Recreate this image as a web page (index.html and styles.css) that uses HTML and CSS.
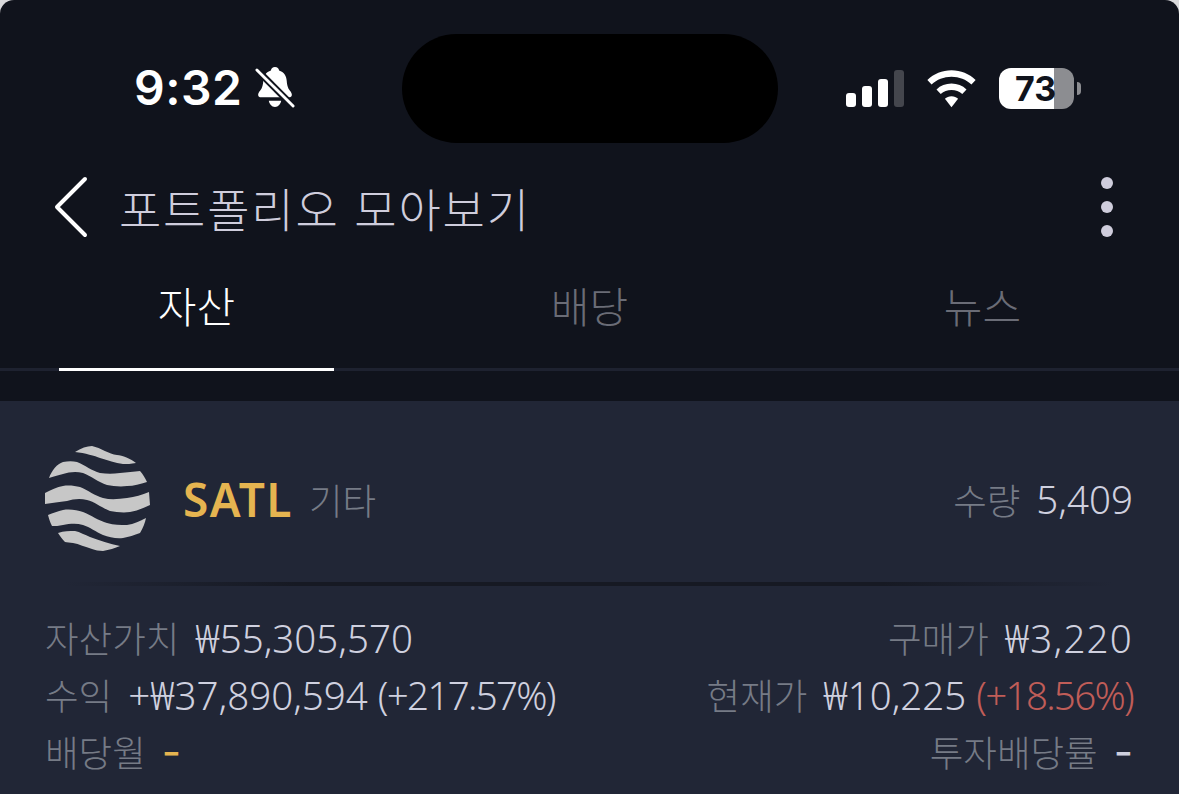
FILE: index.html
```html
<!DOCTYPE html>
<html lang="ko">
<head>
    <meta charset="UTF-8">
    <meta name="viewport" content="width=device-width, initial-scale=1.0">
    <title>포트폴리오 모아보기</title>
    <link rel="stylesheet" href="styles.css">
</head>
<body>
    <div class="screen">
        <div class="status-bar">
            <div class="status-left">
                <span class="clock">9:32</span>
                <svg class="bell" width="40" height="44" viewBox="0 0 42 44">
                    <path fill="#fff" d="M21 0c2.500 0 4 1.500 4.300 3.600 5 1.500 7.700 5.600 8 10.800.2 4 1 7.500 3.200 10.200 1.300 1.600 2.200 2.900 2.200 4.400 0 1.800-1.300 2.800-3.300 2.800H6.600c-2 0-3.300-1-3.300-2.800 0-1.500.9-2.800 2.200-4.400 2.200-2.700 3-6.200 3.200-10.200.3-5.200 3-9.300 8-10.800C17 1.500 18.500 0 21 0zM14.500 35.500h13c-.5 3.300-3 6.500-6.500 6.500s-6-3.200-6.500-6.500z"/>
                    <path stroke="#10131c" stroke-width="7" d="M1 2l40 40"/>
                    <path stroke="#fff" stroke-width="3" stroke-linecap="round" d="M2 3l38 38"/>
                </svg>
            </div>
            <div class="island"></div>
            <div class="status-right">
                <div class="signal">
                    <span class="bar bar-1"></span>
                    <span class="bar bar-2"></span>
                    <span class="bar bar-3"></span>
                    <span class="bar bar-4"></span>
                </div>
                <svg class="wifi" width="52" height="38" viewBox="0 0 52 38">
                    <path fill="#fff" d="M26 0c9.500 0 18 3.700 24.600 9.800l-4.300 4.600C40.900 9.500 33.800 6.600 26 6.600S11.100 9.500 5.700 14.400L1.400 9.800C8 3.700 16.500 0 26 0z"/>
                    <path fill="#fff" d="M26 13.500c5.900 0 11.200 2.200 15.300 5.900L37 24c-3-2.600-6.800-4.100-11-4.100S18 21.400 15 24l-4.300-4.600c4.100-3.700 9.400-5.900 15.300-5.900z"/>
                    <path fill="#fff" d="M26 26.500c2.700 0 5 1 6.700 2.500L26 37.500 19.300 29c1.700-1.500 4-2.500 6.700-2.500z"/>
                </svg>
                <div class="battery">
                    <div class="battery-body"><span>73</span></div>
                    <div class="battery-cap"></div>
                </div>
            </div>
        </div>

        <div class="title-bar">
            <svg class="back" width="36" height="62" viewBox="0 0 36 62">
                <path fill="none" stroke="#fff" stroke-width="4" stroke-linecap="round" stroke-linejoin="round" d="M32 3L4 31l28 28"/>
            </svg>
            <h1>포트폴리오 모아보기</h1>
            <div class="more">
                <span></span>
                <span></span>
                <span></span>
            </div>
        </div>

        <div class="tabs">
            <div class="tab active">자산</div>
            <div class="tab">배당</div>
            <div class="tab">뉴스</div>
        </div>

        <div class="card">
            <div class="card-head">
                <svg class="logo" width="106" height="106" viewBox="0 0 106 106">
                    <g fill="#c7c7c7">
                        <path d="M30 6C36 2 42 0 47 0c9 2 17 8 25 9 5 0 14 4 19 8-5 1-9 1-13 1-8-1-15-4-23-6-5-2-15-5-25-6z"/>
                        <path d="M4 32C7 24 12 18 18 16c5-1 10-1 14 0 8 3 15 9 23 11 7 1 13 1 20 0 7-1 14-1 20-2 3 3 5 7 7 11-7 2-13 4-20 4-7 1-14 0-20-1-9-3-16-9-24-12-7-2-14-1-20 1-5 1-10 3-14 4z"/>
                        <path d="M0 58c-1-4 0-8 0-11 6-3 12-6 18-7 6-1 12 0 17 1 8 3 15 9 23 11 8 2 16 1 24 0 8-1 15-3 22-6l1 13c-7 3-13 6-20 7-7 1-14 0-20-1-8-3-15-9-23-11-7-2-14-1-20 1-8 1-15 2-22 3z"/>
                        <path d="M3 69c5-2 10-4 15-5 7-1 14 0 20 2 8 3 16 9 24 11 7 2 13 2 20 2 7-1 13-4 19-7-1 5-3 10-6 15-6 2-11 4-17 5-7 1-14-1-20-3-7-3-13-8-20-10-7-2-14-1-20 0-4 1-8 1-11 1-2-4-3-7-4-11z"/>
                        <path d="M13 87c6-2 11-2 17-2 5 1 10 4 15 6 9 3 20 7 30 9-5 2-11 4-17 5-4 0-8-1-11-2-7-2-13-5-19-6-3 0-6-1-8-1-3-3-5-6-7-9z"/>
                    </g>
                </svg>
                <span class="ticker">SATL</span>
                <span class="label category">기타</span>
                <div class="qty">
                    <span class="label">수량</span>
                    <span class="value">5,409</span>
                </div>
            </div>
            <div class="divider"></div>
            <div class="rows">
                <div class="row">
                    <div class="cell">
                        <span class="label">자산가치</span>
                        <span class="value">₩55,305,570</span>
                    </div>
                    <div class="cell">
                        <span class="label">구매가</span>
                        <span class="value wide">₩3,220</span>
                    </div>
                </div>
                <div class="row">
                    <div class="cell">
                        <span class="label">수익</span>
                        <span class="value">+₩37,890,594 <span class="pct">(+217.57%)</span></span>
                    </div>
                    <div class="cell">
                        <span class="label">현재가</span>
                        <span class="value">₩10,225 <span class="pct up">(+18.56%)</span></span>
                    </div>
                </div>
                <div class="row">
                    <div class="cell">
                        <span class="label">배당월</span>
                        <span class="value dash gold">-</span>
                    </div>
                    <div class="cell">
                        <span class="label">투자배당률</span>
                        <span class="value dash">-</span>
                    </div>
                </div>
            </div>
        </div>
    </div>
</body>
</html>
```

FILE: styles.css
```css
* {
    box-sizing: border-box;
}
html, body {
    height: 100%;
}
body {
    margin: 0;
    background-color: #d9d9db;
    font-family: "Noto Sans", "Noto Sans CJK KR", sans-serif;
    overflow: hidden;
}
.screen {
    height: 794px;
    background-color: #10131c;
    border-radius: 14px 14px 0 0;
    overflow: hidden;
}

/* status bar */
.status-bar {
    height: 158px;
    padding: 34px 98px 0 134px;
    display: flex;
    align-items: flex-start;
}
.status-left {
    width: 268px;
    height: 107px;
    display: flex;
    align-items: center;
    gap: 13px;
}
.clock {
    font-family: Inter, sans-serif;
    font-size: 48px;
    font-weight: 600;
    color: #fff;
    letter-spacing: 0.5px;
}
.island {
    width: 376px;
    height: 109px;
    background-color: #000;
    border-radius: 55px;
}
.status-right {
    margin-left: auto;
    width: 235px;
    height: 109px;
    display: flex;
    align-items: center;
    gap: 22px;
}
.signal {
    display: flex;
    align-items: flex-end;
    gap: 6px;
    height: 37px;
}
.bar {
    width: 10px;
    background-color: #fff;
    border-radius: 3px;
}
.bar-1 { height: 14px; }
.bar-2 { height: 21px; }
.bar-3 { height: 28px; }
.bar-4 { height: 37px; background-color: #44464d; }
.battery {
    display: flex;
    align-items: center;
    gap: 3px;
}
.battery-body {
    width: 75px;
    height: 41px;
    border-radius: 12px;
    background: linear-gradient(90deg, #fff 0, #fff 55px, #8c8d91 55px);
    display: flex;
    align-items: center;
    padding-left: 16px;
    font-family: Inter, sans-serif;
    font-size: 34px;
    font-weight: 700;
    color: #10131c;
}
.battery-cap {
    width: 4px;
    height: 13px;
    background-color: #8c8d91;
    border-radius: 0 7px 7px 0;
}

/* title */
.title-bar {
    height: 98px;
    padding: 0 66px 0 53px;
    display: flex;
    align-items: center;
}
.title-bar h1 {
    margin: 0 0 0 30px;
    flex: 1;
    font-family: "Noto Sans CJK KR", sans-serif;
    font-size: 46px;
    font-weight: 300;
    color: #cfcddc;
    letter-spacing: 1.8px;
}
.more {
    display: flex;
    flex-direction: column;
    gap: 12px;
}
.more span {
    width: 12px;
    height: 12px;
    border-radius: 50%;
    background-color: #cfcddc;
}

/* tabs */
.tabs {
    height: 115px;
    padding: 0 59px;
    display: flex;
    justify-content: space-between;
    border-bottom: 3px solid #1e2230;
}
.tab {
    width: 275px;
    height: 115px;
    padding-top: 18px;
    text-align: center;
    font-family: "Noto Sans CJK KR", sans-serif;
    font-size: 42px;
    font-weight: 300;
    color: #6a6c76;
}
.tab.active {
    color: #fff;
    border-bottom: 3px solid #fff;
}

/* card */
.card {
    margin-top: 30px;
    height: 393px;
    background-color: #212636;
    padding: 45px 46px 0 45px;
}
.card-head {
    display: flex;
    align-items: center;
    height: 106px;
}
.logo {
    flex-shrink: 0;
}
.ticker {
    margin-left: 32px;
    font-size: 46px;
    font-weight: 600;
    letter-spacing: 1.4px;
    color: #e5b450;
}
.category {
    margin-left: 16px;
}
.qty {
    margin-left: auto;
    display: flex;
    align-items: center;
    gap: 16px;
}
.divider {
    height: 4px;
    margin: 30px 20px 0 20px;
    background: linear-gradient(90deg, #212636, #161923 22%, #161923 78%, #212636);
}
.rows {
    margin-top: 23px;
}
.row {
    height: 57px;
    display: flex;
    justify-content: space-between;
    align-items: center;
}
.cell {
    display: flex;
    align-items: center;
    gap: 16px;
}
.label {
    font-family: "Noto Sans CJK KR", sans-serif;
    font-size: 36.5px;
    font-weight: 300;
    color: #767b86;
}
.value {
    font-family: "Noto Sans", "Noto Sans CJK KR", sans-serif;
    font-size: 38.5px;
    font-weight: 300;
    color: #cfd0df;
}
.wide {
    letter-spacing: 1.2px;
}
.pct {
    letter-spacing: -1.7px;
}
.dash {
    font-family: Inter, sans-serif;
    font-weight: 400;
    font-size: 42px;
}
.up {
    color: #c05d58;
}
.gold {
    color: #e5b450;
}
```
